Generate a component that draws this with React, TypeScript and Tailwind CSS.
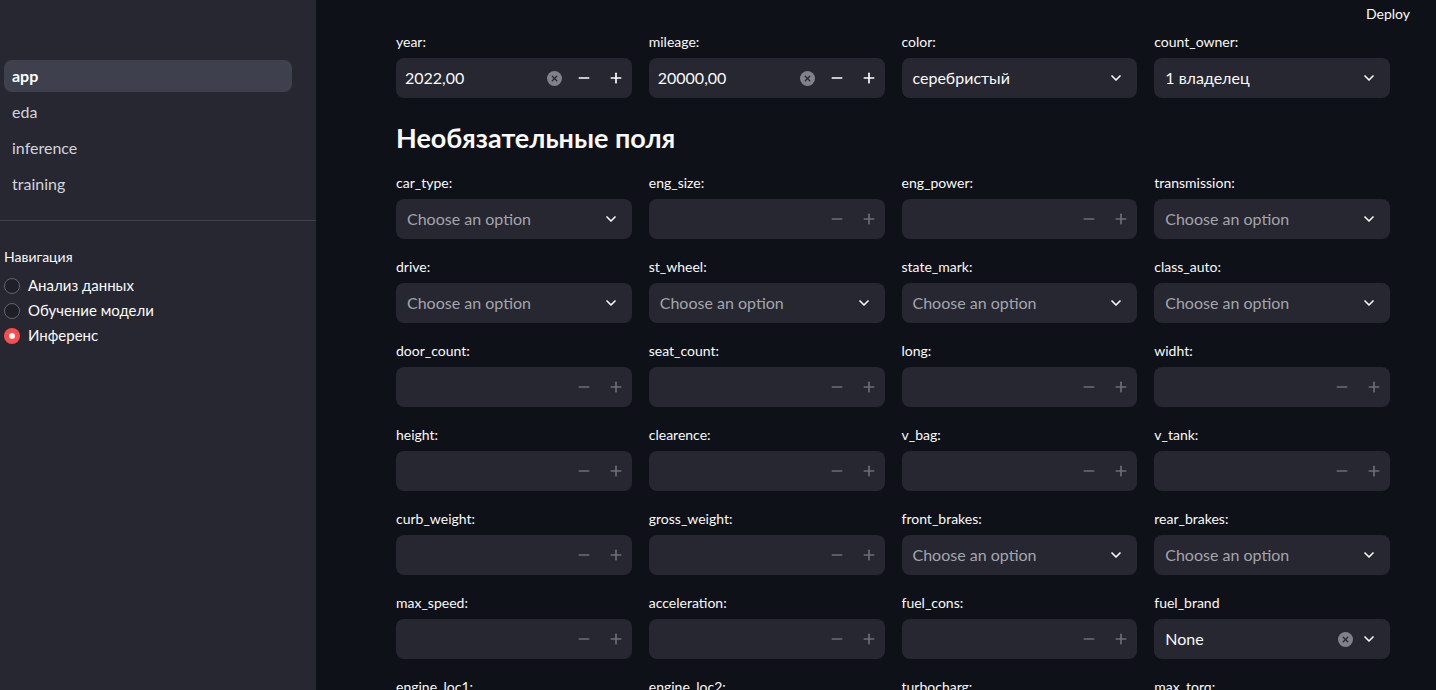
import { ChevronDown, Minus, Plus, X } from 'lucide-react';

type Field =
  | { kind: 'num'; label: string; value?: string }
  | { kind: 'sel'; label: string; value?: string; clearable?: boolean };

const rows: Field[][] = [
  [
    { kind: 'sel', label: 'car_type:' },
    { kind: 'num', label: 'eng_size:' },
    { kind: 'num', label: 'eng_power:' },
    { kind: 'sel', label: 'transmission:' },
  ],
  [
    { kind: 'sel', label: 'drive:' },
    { kind: 'sel', label: 'st_wheel:' },
    { kind: 'sel', label: 'state_mark:' },
    { kind: 'sel', label: 'class_auto:' },
  ],
  [
    { kind: 'num', label: 'door_count:' },
    { kind: 'num', label: 'seat_count:' },
    { kind: 'num', label: 'long:' },
    { kind: 'num', label: 'widht:' },
  ],
  [
    { kind: 'num', label: 'height:' },
    { kind: 'num', label: 'clearence:' },
    { kind: 'num', label: 'v_bag:' },
    { kind: 'num', label: 'v_tank:' },
  ],
  [
    { kind: 'num', label: 'curb_weight:' },
    { kind: 'num', label: 'gross_weight:' },
    { kind: 'sel', label: 'front_brakes:' },
    { kind: 'sel', label: 'rear_brakes:' },
  ],
  [
    { kind: 'num', label: 'max_speed:' },
    { kind: 'num', label: 'acceleration:' },
    { kind: 'num', label: 'fuel_cons:' },
    { kind: 'sel', label: 'fuel_brand', value: 'None', clearable: true },
  ],
  [
    { kind: 'num', label: 'engine_loc1:' },
    { kind: 'num', label: 'engine_loc2:' },
    { kind: 'sel', label: 'turbocharg:' },
    { kind: 'num', label: 'max_torq:' },
  ],
];

const topRow: Field[] = [
  { kind: 'num', label: 'year:', value: '2022,00' },
  { kind: 'num', label: 'mileage:', value: '20000,00' },
  { kind: 'sel', label: 'color:', value: 'серебристый' },
  { kind: 'sel', label: 'count_owner:', value: '1 владелец' },
];

function ClearIcon() {
  return (
    <span className="flex items-center justify-center w-[15px] h-[15px] rounded-full bg-[#80828b]">
      <X className="w-[9px] h-[9px] text-[#262730]" strokeWidth={3.5} />
    </span>
  );
}

function NumberInput({ value }: { value?: string }) {
  const active = !!value;
  const btn = active ? 'text-white' : 'text-[#6c6e78]';
  return (
    <div className="flex items-center h-10 rounded-lg bg-[#262730] pl-[9px]">
      <span className="flex-1 text-[16px] text-[#fafafa]">{value ?? ''}</span>
      {active && (
        <span className="mr-[6px]">
          <ClearIcon />
        </span>
      )}
      <span className={`w-8 flex items-center justify-center ${btn}`}>
        <Minus className="w-4 h-4" strokeWidth={2.5} />
      </span>
      <span className={`w-8 flex items-center justify-center ${btn}`}>
        <Plus className="w-4 h-4" strokeWidth={2.5} />
      </span>
    </div>
  );
}

function SelectInput({ value, clearable }: { value?: string; clearable?: boolean }) {
  return (
    <div className="flex items-center h-10 rounded-lg bg-[#262730] pl-[11px] pr-[13px]">
      <span className={`flex-1 text-[16px] ${value ? 'text-[#fafafa]' : 'text-[#a3a5ad]'}`}>
        {value ?? 'Choose an option'}
      </span>
      {clearable && (
        <span className="mr-[8px]">
          <ClearIcon />
        </span>
      )}
      <ChevronDown className="w-4 h-4 text-[#fafafa]" strokeWidth={2.5} />
    </div>
  );
}

function FieldBox({ f }: { f: Field }) {
  return (
    <div className="flex flex-col">
      <div className="h-5 text-[14px] leading-5 text-[#fafafa] mb-1.5">{f.label}</div>
      {f.kind === 'num' ? (
        <NumberInput value={f.value} />
      ) : (
        <SelectInput value={f.value} clearable={f.clearable} />
      )}
    </div>
  );
}

function Row({ fields }: { fields: Field[] }) {
  return (
    <div className="grid grid-cols-4 gap-x-[17px]">
      {fields.map((f) => (
        <FieldBox key={f.label} f={f} />
      ))}
    </div>
  );
}

const pages = ['app', 'eda', 'inference', 'training'];
const radios = ['Анализ данных', 'Обучение модели', 'Инференс'];

export default function App() {
  return (
    <div
      className="flex w-[1436px] h-[690px] overflow-hidden bg-[#0e1117] text-[#fafafa]"
      style={{ fontFamily: '"Lato", "Noto Sans", sans-serif' }}
    >
      {/* Sidebar */}
      <aside className="w-[316px] shrink-0 bg-[#262730] pt-[60px]">
        <nav className="flex flex-col gap-1 pl-1 pr-6">
          {pages.map((p, i) => (
            <div
              key={p}
              className={`h-8 flex items-center pl-2 rounded-lg text-[16px] ${
                i === 0 ? 'bg-[#3e404d] font-bold text-white' : 'text-[#d4d5da]'
              }`}
            >
              {p}
            </div>
          ))}
        </nav>
        <div className="mt-5 border-t border-[#3f414c]" />
        <div className="pl-1 pt-[26px]">
          <div className="text-[14px] leading-5 text-[#fafafa]">Навигация</div>
          <div className="flex flex-col mt-[6px]">
            {radios.map((r, i) => (
              <div key={r} className="h-[25px] flex items-center gap-2">
                {i === 2 ? (
                  <span className="w-4 h-4 rounded-full bg-[#ff4b4b] flex items-center justify-center">
                    <span className="w-[6px] h-[6px] rounded-full bg-white" />
                  </span>
                ) : (
                  <span className="w-4 h-4 rounded-full border border-[#62646e] bg-[#1e1f27]" />
                )}
                <span className="text-[15px] text-[#fafafa]">{r}</span>
              </div>
            ))}
          </div>
        </div>
      </aside>

      {/* Main */}
      <main className="relative flex-1">
        <div className="absolute top-[3px] right-[26px] text-[14px] text-[#fafafa]">Deploy</div>
        <div className="w-[994px] ml-[80px] pt-8">
          <Row fields={topRow} />
          <h3 className="mt-5 mb-[15px] h-10 leading-10 text-[27px] font-bold">Необязательные поля</h3>
          <div className="flex flex-col gap-[18px]">
            {rows.map((r, i) => (
              <Row key={i} fields={r} />
            ))}
          </div>
        </div>
      </main>
    </div>
  );
}
